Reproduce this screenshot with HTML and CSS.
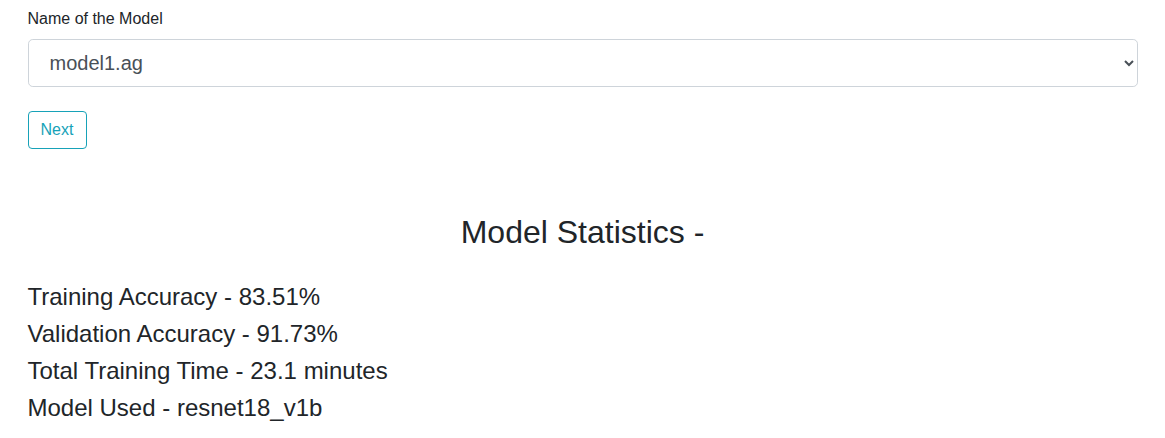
FILE: index.html
```html
<!DOCTYPE html>
<html lang="en">
<head>
<meta charset="utf-8">
<title>Model Statistics</title>
<link rel="stylesheet" href="styles.css">
</head>
<body>
<main class="container">
  <form class="model-form">
    <div class="form-group">
      <label class="form-label" for="model">Name of the Model</label>
      <select id="model" class="form-select">
        <option>model1.ag</option>
      </select>
    </div>
    <button type="button" class="btn-next">Next</button>
  </form>
  <section class="stats">
    <h2 class="stats-title">Model Statistics -</h2>
    <h4 class="stat">Training Accuracy - 83.51%</h4>
    <h4 class="stat">Validation Accuracy - 91.73%</h4>
    <h4 class="stat">Total Training Time - 23.1 minutes</h4>
    <h4 class="stat">Model Used - resnet18_v1b</h4>
  </section>
</main>
</body>
</html>
```

FILE: styles.css
```css
* { box-sizing: border-box; }
html, body { margin: 0; padding: 0; background: #fff; }
body {
  font-family: "Liberation Sans", Arial, sans-serif;
  font-size: 16px;
  line-height: 1.5;
  color: #212529;
}
.container {
  max-width: 1110px;
  margin: 0 auto;
  padding-top: 7px;
}
.model-form { margin: 0; }
.form-group {
  display: flex;
  flex-direction: column;
  margin-bottom: 24px;
}
.form-label {
  display: block;
  margin-bottom: 8px;
  font-size: 16px;
  line-height: 24px;
}
.form-select {
  width: 100%;
  height: 48px;
  padding: 8px 12px 8px 17px;
  font-family: "Liberation Sans", Arial, sans-serif;
  font-size: 20px;
  line-height: 1.5;
  color: #495057;
  background-color: #fff;
  border: 1px solid #ced4da;
  border-radius: 4.8px;
}
.btn-next {
  display: inline-block;
  min-width: 59px;
  height: 38px;
  padding: 6px 12px;
  font-family: "Liberation Sans", Arial, sans-serif;
  font-size: 16px;
  line-height: 1.5;
  color: #17a2b8;
  background: transparent;
  border: 1px solid #17a2b8;
  border-radius: 4px;
}
.stats { margin-top: 64px; }
.stats-title {
  margin: 0 0 32px;
  font-size: 32px;
  font-weight: 400;
  line-height: 1.2;
  text-align: center;
}
.stat {
  margin: 0 0 8px;
  font-size: 24px;
  font-weight: 400;
  line-height: 1.2;
}
```
